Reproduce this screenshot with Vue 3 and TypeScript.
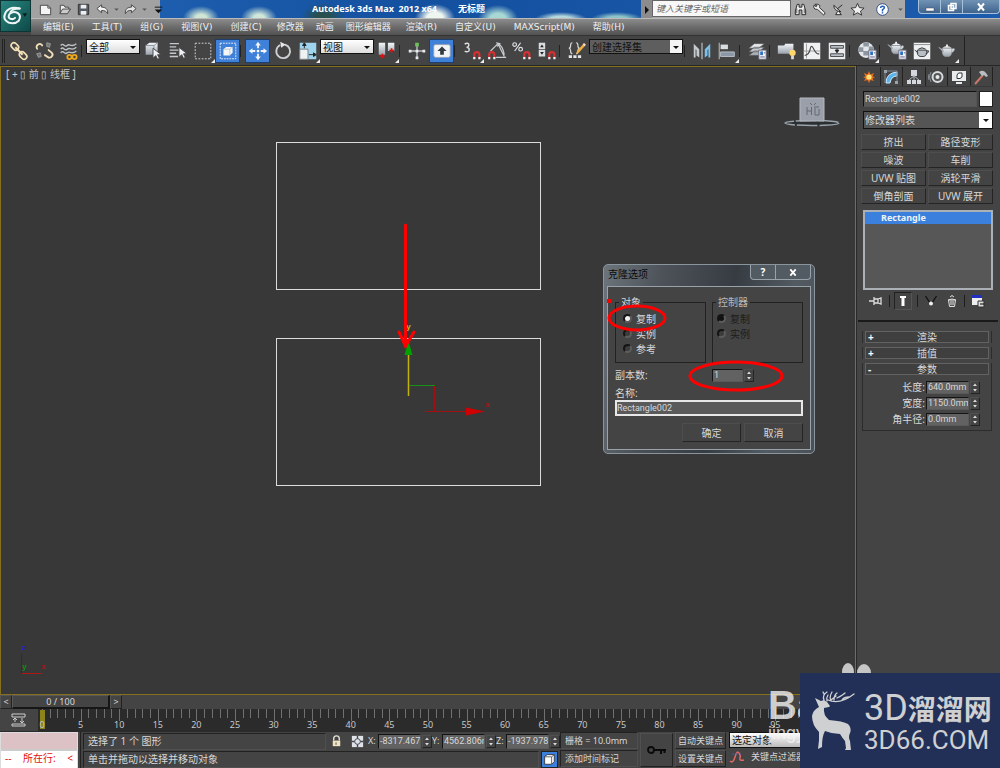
<script setup lang="ts">
import { ref } from 'vue'

interface Tool {
  kind: 'button' | 'sep' | 'select' | 'combo'
  icon?: string
  label?: string
  value?: string
  active?: boolean
  flyout?: boolean
}

const menus = [
  { text: '编辑(E)' },
  { text: '工具(T)' },
  { text: '组(G)' },
  { text: '视图(V)' },
  { text: '创建(C)' },
  { text: '修改器', tight: true },
  { text: '动画', tight: true },
  { text: '图形编辑器', tight: true },
  { text: '渲染(R)' },
  { text: '自定义(U)' },
  { text: 'MAXScript(M)' },
  { text: '帮助(H)' },
]

const sep: Tool = { kind: 'sep' }
const btn = (icon: string, label: string, active = false, flyout = false): Tool => ({
  kind: 'button',
  icon,
  label,
  active,
  flyout,
})

const tools: Tool[] = [
  btn('link', '选择并链接'),
  btn('unlink', '断开当前选择链接'),
  btn('bind', '绑定到空间扭曲'),
  sep,
  { kind: 'select', label: '选择过滤器', value: '全部' },
  btn('pick', '选择对象'),
  btn('byname', '按名称选择'),
  btn('region', '矩形选择区域', false, true),
  btn('window', '窗口/交叉', true),
  sep,
  btn('move', '选择并移动', true),
  btn('rotate', '选择并旋转'),
  btn('scale', '选择并缩放', false, true),
  { kind: 'select', label: '参考坐标系', value: '视图' },
  btn('pivot', '使用轴点中心', false, true),
  sep,
  btn('manip', '选择并操纵'),
  btn('keys', '键盘快捷键覆盖', true),
  sep,
  btn('snap3', '捕捉开关', false, true),
  btn('snapangle', '角度捕捉'),
  btn('snappct', '百分比捕捉'),
  btn('snapspin', '微调器捕捉'),
  sep,
  btn('sets', '编辑命名选择集'),
  { kind: 'combo', label: '命名选择集', value: '创建选择集' },
  sep,
  btn('mirror', '镜像'),
  btn('align', '对齐', false, true),
  sep,
  btn('layers', '层管理器'),
  sep,
  btn('ribbon', '石墨建模工具'),
  btn('curve', '曲线编辑器'),
  btn('schematic', '图解视图'),
  sep,
  btn('material', '材质编辑器', false, true),
  sep,
  btn('rsetup', '渲染设置'),
  btn('rframe', '渲染帧窗口'),
  btn('render', '渲染产品', false, true),
]

const quick = [
  ['new', '新建'],
  ['open', '打开'],
  ['save', '保存'],
  ['undo', '撤消'],
  ['caret', '撤消列表'],
  ['redo', '重做'],
  ['caret', '重做列表'],
  ['more', '自定义'],
]
const infoTools = [
  ['binoc', '搜索'],
  ['wrench', '速博应用中心'],
  ['dish', '通讯中心'],
  ['star', '收藏夹'],
]
const tabs = [
  ['create', '创建'],
  ['modify', '修改'],
  ['hier', '层次'],
  ['motion', '运动'],
  ['display', '显示'],
  ['hammer', '实用程序'],
]
const modifiers = ['挤出', '路径变形', '噪波', '车削', 'UVW 贴图', '涡轮平滑', '倒角剖面', 'UVW 展开']

const objectName = ref('Rectangle002')
const cloneName = ref('Rectangle002')
const copies = ref('1')
const cloneKind = ref('复制')
const ctrlKind = ref('复制')
const query = ref('')
const params = ref([
  { id: 'len', label: '长度:', value: '640.0mm' },
  { id: 'wid', label: '宽度:', value: '1150.0mm' },
  { id: 'rad', label: '角半径:', value: '0.0mm' },
])
const coords = ref([
  { id: 'x', label: 'X:', value: '-8317.467mm' },
  { id: 'y', label: 'Y:', value: '4562.806mm' },
  { id: 'z', label: 'Z:', value: '-1937.978mm' },
])
const frames = Array.from({ length: 20 }, (_, i) => i * 5)
</script>

<template>
  <div class="app">
    <svg class="defs" aria-hidden="true">
      <defs>
        <linearGradient id="g-metal" x1="0" y1="0" x2="0" y2="1">
          <stop offset="0" stop-color="#f4f6f8" />
          <stop offset="1" stop-color="#9aa2ac" />
        </linearGradient>
        <symbol id="i-link" viewBox="0 0 24 24">
          <g fill="none" stroke="#f3dfb8" stroke-width="1.800">
            <rect x="3" y="4" width="9" height="6" rx="3" transform="rotate(45 7.500 7)" />
            <rect x="12" y="14" width="9" height="6" rx="3" transform="rotate(45 16.500 17)" />
            <path d="M8 8l8 8" stroke-width="2.400" />
          </g>
        </symbol>
        <symbol id="i-unlink" viewBox="0 0 24 24">
          <g fill="none" stroke="#f3dfb8" stroke-width="2" stroke-linecap="round">
            <path d="M4.500 9.500a3 3 0 0 1 1-4.500c2-1.500 4-.5 4.500 1" />
            <path d="M17 11l3 2.500a3 3 0 0 1-4 5l-3-2" />
          </g>
          <path d="M15 3l4 1-1 4-3-1zM4 15l4-1 1 4-3 1z" fill="#777" stroke="#999" />
        </symbol>
        <symbol id="i-bind" viewBox="0 0 24 24">
          <g fill="none" stroke="#bfc3c7" stroke-width="1.500">
            <path d="M3 6c3-4 4 3 7 0s4 3 10-2M3 10c3-4 4 3 7 0s4 3 10-2M3 14c3-4 4 3 7 0s4 3 10-2" />
          </g>
          <g fill="none" stroke="#f0a818" stroke-width="2"><circle cx="12.500" cy="18.500" r="2.300" /><circle cx="18" cy="18.500" r="2.300" /></g>
        </symbol>
        <symbol id="i-pick" viewBox="0 0 24 24">
          <path d="M4 6l4-3h9v10l-4 3H4z" fill="url(#g-metal)" /><path d="M4 6h9l4-3M13 6v10" stroke="#8b929a" fill="none" />
          <path d="M12 9v11l3-3 2 4 2-1-2-4h4z" fill="#eef1f5" stroke="#444" />
        </symbol>
        <symbol id="i-byname" viewBox="0 0 24 24">
          <path d="M3 4h10M3 7.500h7M3 11h10M3 14.500h7M3 18h9" stroke="#c5c9cd" stroke-width="1.500" />
          <path d="M13 8v11l3-3 2 4 2-1-2-4h4z" fill="#eef1f5" stroke="#444" />
        </symbol>
        <symbol id="i-region" viewBox="0 0 24 24">
          <rect x="3.500" y="3.500" width="17" height="17" fill="none" stroke="#d6dade" stroke-dasharray="2 1.500" />
        </symbol>
        <symbol id="i-window" viewBox="0 0 24 24">
          <rect x="3.500" y="3.500" width="17" height="17" fill="none" stroke="#f0f4f8" stroke-dasharray="2 1" />
          <path d="M7 10l3-2.500h7V14l-3 3H7z" fill="#f4f6f8" /><path d="M7 10h7l3-2.500M14 10v7" stroke="#aab1b9" stroke-width=".7" fill="none" />
        </symbol>
        <symbol id="i-move" viewBox="0 0 24 24">
          <path d="M12 2l3 4h-2v3h-2V6H9zM12 22l3-4h-2v-3h-2v3H9zM2 12l4-3v2h3v2H6v2zM22 12l-4-3v2h-3v2h3v2z" fill="#f2f6fa" />
          <circle cx="12" cy="12" r="1.500" fill="#fff" />
        </symbol>
        <symbol id="i-rotate" viewBox="0 0 24 24">
          <path d="M9 5.500A7.500 7.500 0 1 0 14 5" fill="none" stroke="#cdd1d5" stroke-width="2" /><path d="M9 2l6 3-5 3.500z" fill="#e4e7ea" />
        </symbol>
        <symbol id="i-scale" viewBox="0 0 24 24">
          <path d="M3 3h18v18H3z" fill="#9fd4ee" /><path d="M3 10h9v11H3z" fill="#eef2f5" stroke="#777" />
          <path d="M8 3l-2 3h4zM8 5v4M21 16l-3-2v4zM13 16h6" fill="#222" stroke="#222" />
        </symbol>
        <symbol id="i-pivot" viewBox="0 0 24 24">
          <path d="M3 3h7v13H3zM13 3h7v9h-7z" fill="url(#g-metal)" /><path d="M7 15v5M4.500 17.500h5M17 9v5M14.500 11.500h5" stroke="#e01010" stroke-width="1.800" />
        </symbol>
        <symbol id="i-manip" viewBox="0 0 24 24">
          <path d="M12 5v15M4 12h16" stroke="#b9bec4" stroke-width="1.500" /><path d="M10 3h4v4h-4z" fill="#6fc05a" />
          <path d="M10.500 18h3v3h-3zM3 10.500h3v3H3zM18 10.500h3v3h-3zM10.500 10.500h3v3h-3z" fill="#e8ecef" />
        </symbol>
        <symbol id="i-keys" viewBox="0 0 24 24">
          <rect x="3" y="5" width="18" height="14" rx="2" fill="#f2f4f6" stroke="#8ea0b4" /><path d="M12 7l5 5h-3v4h-4v-4H7z" fill="#333a42" />
        </symbol>
        <symbol id="i-magnet" viewBox="0 0 24 24">
          <path d="M14.500 20v-4a2.800 2.800 0 0 1 5.600 0v4" fill="none" stroke="#d83030" stroke-width="2.400" />
          <path d="M13.300 18.500h2.400V21h-2.400zM18.900 18.500h2.400V21h-2.400z" fill="#f2f2f2" />
        </symbol>
        <symbol id="i-snap3" viewBox="0 0 24 24">
          <path d="M4 4.500c3-2 5-.5 4.500 1.500S6 8 6 8s3 0 3 2.500-3 3-5 1.500" fill="none" stroke="#dfe2e5" stroke-width="1.500" /><use href="#i-magnet" />
        </symbol>
        <symbol id="i-snapangle" viewBox="0 0 24 24">
          <path d="M5 12L13 4l7 14M11 19h11M13 4q5 2 7 12M11 3l4 1-3 3" fill="none" stroke="#c9cdd1" stroke-width="1.300" /><use href="#i-magnet" x="-11" />
        </symbol>
        <symbol id="i-snappct" viewBox="0 0 24 24">
          <path d="M10.500 3L4 12" stroke="#dfe2e5" stroke-width="1.300" /><g fill="none" stroke="#dfe2e5" stroke-width="1.300"><circle cx="4" cy="5" r="2" /><circle cx="10.500" cy="10" r="2" /></g><use href="#i-magnet" />
        </symbol>
        <symbol id="i-snapspin" viewBox="0 0 24 24">
          <path d="M3 3h7v7H3zM3 11h7v7H3z" fill="#d9dde1" /><path d="M4.500 8h4l-2-3zM4.500 13h4l-2 3z" fill="#222" /><use href="#i-magnet" />
        </symbol>
        <symbol id="i-sets" viewBox="0 0 24 24">
          <path d="M7 3q-2 0-2 3t-2 3q2 0 2 3t2 3M11 3q2 0 2 3t2 3q-2 0-2 3t-2 3" fill="none" stroke="#d5d8db" stroke-width="1.300" />
          <path d="M19 4l2 2-7 8-3 1 1-3z" fill="#f0b040" /><path d="M19 4l2 2" stroke="#f6e2d0" stroke-width="2" />
          <path d="M3 18h14" stroke="#e4e6e8" stroke-width="3" stroke-dasharray="3.500 1.500" />
        </symbol>
        <symbol id="i-mirror" viewBox="0 0 24 24">
          <path d="M3 4l6 6v9l-3-2v-6l-1-1v9H3z" fill="#c4c9ce" /><path d="M12 3v18" stroke="#dfe3e6" /><path d="M21 4l-6 6v9l3-2v-6l1-1v9h2z" fill="#7cc0ea" />
        </symbol>
        <symbol id="i-align" viewBox="0 0 24 24">
          <path d="M3.500 3v18" stroke="#ccc" /><path d="M5 5h8v5H5z" fill="#d9dde1" /><path d="M5 13h15v5H5z" fill="#8d98a6" stroke="#b9c1ca" />
        </symbol>
        <symbol id="i-card" viewBox="0 0 24 24">
          <path d="M14 11h8v10h-8z" fill="#f3f5f7" stroke="#667" /><path d="M15.500 12.500h3v4h-3z" fill="#2c6fc0" /><path d="M15.500 18.500h5M19.500 14h1.500" stroke="#558" />
        </symbol>
        <symbol id="i-layers" viewBox="0 0 24 24">
          <path d="M3 17l6-5h11l-6 5zM3 13l6-5h11l-6 5zM3 9l6-5h11l-6 5z" fill="url(#g-metal)" stroke="#555" stroke-width=".7" /><use href="#i-card" />
        </symbol>
        <symbol id="i-ribbon" viewBox="0 0 24 24">
          <path d="M2 6h7l1-2h9v11H2z" fill="url(#g-metal)" /><circle cx="18" cy="14" r="3.500" fill="#ffd76a" /><path d="M16.500 17h3v4h-3z" fill="#d9dde1" />
        </symbol>
        <symbol id="i-curve" viewBox="0 0 24 24">
          <path d="M3 3h18v18H3z" fill="#eef0f2" /><path d="M6 4v16M3 12h18" stroke="#999" /><path d="M4 17q5-1 6-7t4 0 6 5" fill="none" stroke="#444" stroke-width="1.200" />
        </symbol>
        <symbol id="i-schematic" viewBox="0 0 24 24">
          <path d="M3 3h18v18H3z" fill="#e9ebee" /><path d="M5 6h14v3H5zM5 15h14v3H5z" fill="#b9bfc6" stroke="#444" /><path d="M12 9v4M10 11l2 3 2-3z" stroke="#222" fill="#222" />
        </symbol>
        <symbol id="i-material" viewBox="0 0 24 24">
          <circle cx="11" cy="11" r="8.500" fill="#e3e6ea" /><path d="M8 3h6v4H8zM3 8h5v5H3zM14 7h5v5h-5zM8 12h6v5H8z" fill="#8d959f" /><use href="#i-card" />
        </symbol>
        <symbol id="i-pot" viewBox="0 0 24 24">
          <path d="M7 10h10q1 8-3 9h-4q-4-1-3-9zM3 9l5 3v2zM17 11q4-2 3 1t-4 3" fill="url(#g-metal)" stroke="#99a0a8" stroke-width=".7" /><path d="M7 9.500q5-4 10 0zM11 6h2v2h-2z" fill="#eef1f4" />
        </symbol>
        <symbol id="i-rsetup" viewBox="0 0 24 24"><use href="#i-pot" x="-1" y="-4" /><use href="#i-card" /></symbol>
        <symbol id="i-rframe" viewBox="0 0 24 24">
          <path d="M3 3h18v18H3z" fill="#eef0f2" /><path d="M3 5h18" stroke="#888" /><path d="M7 11h10q1 6-3 7h-4q-4-1-3-7zM4 11l4 3M17 12q3-1 2 1t-3 2M8 10q4-3 8 0" fill="#b8bfc7" stroke="#333" />
        </symbol>
        <symbol id="i-render" viewBox="0 0 24 24"><use href="#i-pot" y="-1" /></symbol>

        <symbol id="i-new" viewBox="0 0 16 16"><path d="M2.500 3.500h8l3 3v7h-11z" fill="#f4f4f4" stroke="#444" /><path d="M10.500 3.500v3h3" fill="none" stroke="#444" /></symbol>
        <symbol id="i-open" viewBox="0 0 16 16"><path d="M3.500 12.500v-9h4l1 2h4v2" fill="#eee" stroke="#444" /><path d="M3 12.500l3-5h8.500l-3.500 5z" fill="#ccc" stroke="#444" /></symbol>
        <symbol id="i-save" viewBox="0 0 16 16"><path d="M2.500 2.500h11v11h-11z" fill="#555c66" stroke="#333" /><path d="M5 3h6v4H5zM5 9.500h6v4H5z" fill="#eee" /></symbol>
        <symbol id="i-undo" viewBox="0 0 16 16"><path d="M2 7l5-4v2.500c4 0 7 2 6.500 7C12 9.500 10 9 7 9v2.500z" fill="#f4f4f4" stroke="#444" /></symbol>
        <symbol id="i-redo" viewBox="0 0 16 16"><path d="M14 7L9 3v2.500c-4 0-7 2-6.500 7C4 9.500 6 9 9 9v2.500z" fill="#e4e4e4" stroke="#444" /></symbol>
        <symbol id="i-caret" viewBox="0 0 16 16"><path d="M4 6h8l-4 4z" fill="#555" /></symbol>
        <symbol id="i-more" viewBox="0 0 16 16"><path d="M4 5.500h8" stroke="#111" /><path d="M4 8h8l-4 4z" fill="#111" /></symbol>
        <symbol id="i-binoc" viewBox="0 0 16 16"><path d="M4.500 2.500h2v3h3v-3h2l2 7v4h-4v-5h-3v5h-4v-4z" fill="#eee" stroke="#222" /><path d="M4 7v5M12 7v5" stroke="#555" /></symbol>
        <symbol id="i-wrench" viewBox="0 0 16 16"><path d="M3 2.500q4-1 5.500 1.500l-.5 2 6 5.500-1.500 2.500-6.500-6-3-.5q-2-2-1-4l2.500 1.500 1-1z" fill="#eee" stroke="#333" /></symbol>
        <symbol id="i-dish" viewBox="0 0 16 16"><path d="M3 3.500q0 6 7.500 7z" fill="#eee" stroke="#222" /><path d="M6.500 7.500L12 3M7 10l-2 3.500h6L9 11" fill="#eee" stroke="#222" /></symbol>
        <symbol id="i-star" viewBox="0 0 16 16"><path d="M8 1.500l2 4.500 5 .5-3.800 3.200L12.500 14 8 11.500 3.500 14l1.300-4.300L1 6.500 6 6z" fill="#eee" stroke="#333" /></symbol>
        <symbol id="i-help" viewBox="0 0 16 16"><circle cx="8" cy="8" r="6.200" fill="#fff" stroke="#2b4a86" /><path d="M6 6.500q0-2 2-2t2 1.700q0 1-2 2V10" fill="none" stroke="#2460c0" stroke-width="1.600" /><path d="M7.200 10.800h1.600v1.500H7.200z" fill="#2460c0" /></symbol>

        <symbol id="i-create" viewBox="0 0 16 16"><path d="M8 2l1.500 3.500L13 4l-1.500 3.500L14 8l-2.500 1.500L13 12l-3.500-1L8 14l-1.500-3L3 12l1.500-2.500L2 8l2.500-.5L3 4l3.500 1.500z" fill="#e8701a" /><circle cx="8" cy="8" r="2.600" fill="#ffe27a" /></symbol>
        <symbol id="i-modify" viewBox="0 0 16 16"><path d="M3 14Q3 4 14 3v4Q8 7 7 14z" fill="#5ab4ec" stroke="#cdeaff" /><path d="M2 2v12M2 2h12v12" fill="none" stroke="#7c8894" /><path d="M1 1h3v3H1zM12 12h3v3h-3z" fill="#9aa2aa" /></symbol>
        <symbol id="i-hier" viewBox="0 0 16 16"><path d="M5 1h6v6H5zM1 11h4v4H1zM6 11h4v4H6zM11 11h4v4h-4z" fill="#d4d8dc" /><path d="M8 6v5M3 11l5-4 5 4" stroke="#b0b5ba" fill="none" /></symbol>
        <symbol id="i-motion" viewBox="0 0 16 16"><circle cx="9.500" cy="8" r="5" fill="#555" stroke="#d8dce0" stroke-width="2" /><circle cx="9.500" cy="8" r="2" fill="#e8ebee" /><path d="M3 3q-3 5 0 10M1 5q-1 3 0 6" stroke="#8a9096" fill="none" /></symbol>
        <symbol id="i-display" viewBox="0 0 16 16"><path d="M1 2h14v10H1zM5 13h6v2H5z" fill="#e8ebee" /><path d="M6 6l1.500-2H11v4L9 9.500H6z" fill="#fff" stroke="#333" /></symbol>
        <symbol id="i-hammer" viewBox="0 0 16 16"><path d="M2 15L10 6" stroke="#c87868" stroke-width="2" /><path d="M6 3q4-3 7 1l2 3-2 1-2-2-2 1z" fill="#b8bec4" /></symbol>
        <symbol id="i-cube" viewBox="0 0 16 16"><path d="M3 5l3-2h8v8l-3 3H3z" fill="#fff" stroke="#333" /><path d="M3 5.500h8L14 3M11 5.500V14" fill="none" stroke="#555" /></symbol>
        <symbol id="i-spin" viewBox="0 0 8 14"><path d="M1.500 5h5L4 2zM1.500 9h5L4 12z" fill="#dcdcdc" /></symbol>
      </defs>
    </svg>

    <header class="head">
      <button class="logo" aria-label="应用程序菜单">
        <svg viewBox="0 0 31 32">
          <g fill="none" stroke="#eef6f4" stroke-linecap="round">
            <path d="M20 8Q10 5 5 12q-4 8 3 11 7 2 11-2 3-5-1-8-5-3-9 1-2 4 1 5 3 1 5-1" stroke-width="2.200" />
            <path d="M20 8q-8 0-10 4" stroke-width="2" />
          </g>
          <path d="M23 13h5l-2.500 4z" fill="#0b1f1e" />
        </svg>
      </button>
      <div class="headmain">
        <div class="titlebar">
          <div class="quick">
            <button v-for="(q, i) in quick" :key="i" :class="{ thin: q[0] === 'caret' }" :aria-label="q[1]">
              <svg><use :href="'#i-' + q[0]" /></svg>
            </button>
          </div>
          <div class="caption"><span>Autodesk 3ds Max&nbsp; 2012 x64</span><span>无标题</span></div>
          <div class="info">
            <button class="expand" aria-label="展开"><svg viewBox="0 0 11 17"><path d="M4 5l4 4-4 4z" fill="#111" /></svg></button>
            <input v-model="query" class="search" aria-label="搜索" placeholder="键入关键字或短语" />
            <div class="infotools">
              <button v-for="t in infoTools" :key="t[0]" :aria-label="t[1]"><svg><use :href="'#i-' + t[0]" /></svg></button>
              <button class="help" aria-label="帮助"><svg><use href="#i-help" /></svg></button>
              <button class="thin" aria-label="帮助菜单"><svg><use href="#i-caret" /></svg></button>
            </div>
          </div>
          <div class="winctl">
            <button aria-label="最小化"><svg viewBox="0 0 16 12"><path d="M4 7h8v3H4z" fill="#fff" stroke="#445" stroke-width=".5" /></svg></button>
            <button aria-label="还原"><svg viewBox="0 0 16 12"><path d="M7 2.500h5v5h-5zM4.500 4.500h5v5h-5z" fill="#6d8cae" stroke="#fff" stroke-width="1.500" /></svg></button>
            <button class="wide" aria-label="关闭"><svg viewBox="0 0 16 12"><path d="M5 2.500l6 7M11 2.500l-6 7" stroke="#fff" stroke-width="2" /></svg></button>
          </div>
        </div>
        <nav class="menubar">
          <button v-for="m in menus" :key="m.text" :class="{ tight: m.tight }">{{ m.text }}</button>
        </nav>
      </div>
    </header>

    <div class="toolbar">
      <span class="grip"></span>
      <template v-for="(t, i) in tools" :key="i">
        <span v-if="t.kind === 'sep'" class="tsep"></span>
        <button v-else-if="t.kind === 'button'" class="tool" :class="{ active: t.active, flyout: t.flyout }" :aria-label="t.label">
          <svg><use :href="'#i-' + t.icon" /></svg>
        </button>
        <span v-else class="drop" :class="t.kind">
          <select :aria-label="t.label"><option>{{ t.value }}</option></select>
        </span>
      </template>
      <span class="tend"></span>
    </div>

    <div class="work">
      <main class="viewport">
        <div class="vplabel">[ + ▯ 前 ▯ 线框 ]</div>
        <svg class="scene" aria-hidden="true">
          <g fill="none" stroke="#dcdcdc">
            <rect x="275.500" y="75.500" width="264" height="147" />
            <rect x="275.500" y="271.500" width="264" height="147" />
          </g>
          <path d="M407.500 288v41" stroke="#c0b010" stroke-width="1.500" />
          <path d="M433.500 319v26M424 344.500h42" stroke="#a01010" fill="none" />
          <path d="M408 318.500h26" stroke="#189018" />
          <path d="M465 340.500v8l19-4z" fill="#d00000" />
          <path d="M407.500 274l4 14h-8z" fill="#00a000" />
          <text x="405" y="262" class="axis yellow">y</text>
          <text x="484" y="340" class="axis red">x</text>
          <g fill="none" stroke="#f00" stroke-width="3" stroke-linecap="round">
            <path d="M404.500 158v121" /><path d="M398 265l6.500 14 8.500-14" />
          </g>
          <path d="M20.500 587v20" stroke="#1a1ac8" /><path d="M21 606.500h20" stroke="#b01818" />
          <text x="20" y="583" class="axis blue">z</text>
          <text x="21" y="602" class="axis green">y</text>
          <text x="40" y="602" class="axis red">x</text>
        </svg>
        <svg class="viewcube" viewBox="0 0 58 30" aria-label="ViewCube">
          <ellipse cx="29" cy="26" rx="27" ry="2.500" fill="#2c2f31" stroke="#9aa3ab" stroke-width="1.500" stroke-dasharray="20 2" />
          <path d="M17 1h24v23H17z" fill="#9b9fa9" stroke="#b4b8c0" />
          <path d="M24 10v8M24 14h4M28.500 10v8M31 10h5M32 11v7h4v-6M27 6l2 2M33 6l-2 2" fill="none" stroke="#646973" />
        </svg>
      </main>

      <aside class="panel">
        <div class="tabs">
          <button v-for="t in tabs" :key="t[0]" :aria-label="t[1]" :class="{ on: t[0] === 'modify' }"><svg><use :href="'#i-' + t[0]" /></svg></button>
        </div>
        <div class="namerow">
          <input v-model="objectName" aria-label="对象名称" />
          <button class="swatch" aria-label="对象颜色"></button>
        </div>
        <span class="drop modlist"><select aria-label="修改器列表"><option>修改器列表</option></select></span>
        <div class="modgrid"><button v-for="m in modifiers" :key="m">{{ m }}</button></div>
        <ul class="stack"><li>Rectangle</li></ul>
        <div class="stacktools">
          <button aria-label="锁定堆栈"><svg viewBox="0 0 16 16"><path d="M1 8h5M6 4v8M6 6h4v4H6M10 6l3-1v6l-3-1" stroke="#ddd" fill="none" stroke-width="1.300" /></svg></button>
          <i></i>
          <button class="sunk" aria-label="显示最终结果"><svg viewBox="0 0 16 16"><path d="M5 3h6v2H9.500v8h-3V5H5z" fill="#fff" /></svg></button>
          <i></i>
          <button aria-label="使唯一"><svg viewBox="0 0 16 16"><path d="M2.500 3l4.500 7M13.500 3L9 10" stroke="#111" stroke-width="1.300" /><circle cx="8" cy="10.500" r="2" fill="#eee" /></svg></button>
          <button aria-label="移除修改器"><svg viewBox="0 0 16 16"><path d="M4.500 7h7l-1 6.500h-5zM4 7q4-2 8 0M6 4q2-3 4 0" fill="#555" stroke="#ddd" /><path d="M7 8v4M9 8v4" stroke="#ddd" /></svg></button>
          <i></i>
          <button aria-label="配置修改器集"><svg viewBox="0 0 16 16"><path d="M2 2h10v10H2z" fill="#eee" /><path d="M2 2h10v3H2z" fill="#2030c0" /><path d="M8 8h6v6H8z" fill="#ddd" stroke="#333" /><path d="M10 11h4" stroke="#000" /></svg></button>
        </div>
        <div class="rollouts">
          <section class="rollout"><button><b>+</b>渲染</button></section>
          <section class="rollout"><button><b>+</b>插值</button></section>
          <section class="rollout open">
            <button><b>-</b>参数</button>
            <div class="params">
              <div v-for="p in params" :key="p.id" class="prow">
                <label :for="p.id">{{ p.label }}</label>
                <input :id="p.id" v-model="p.value" />
                <button class="spin" :aria-label="'调整' + p.label"><svg><use href="#i-spin" /></svg></button>
              </div>
            </div>
          </section>
        </div>
      </aside>
    </div>

    <div class="slider">
      <button aria-label="上一帧">&lt;</button>
      <button class="thumb">0 / 100</button>
      <button aria-label="下一帧">&gt;</button>
    </div>

    <div class="timeline">
      <button class="mini" aria-label="打开迷你曲线编辑器">
        <svg viewBox="0 0 16 16"><path d="M1 2h13v3H1zM1 12h13v2H1zM4 6v4M11 6v4M2 8l2-2 2 2M9 9l2 2 2-2" fill="none" stroke="#ccc" /></svg>
      </button>
      <div class="ruler">
        <div v-for="f in frames" :key="f" class="cell">
          <i v-for="k in 5" :key="k"></i>
          <span>{{ f }}</span>
        </div>
      </div>
    </div>

    <footer class="status">
      <div class="listener">
        <div class="pink"></div>
        <div class="white"><span>--</span><span>所在行:</span><span>&lt;</span></div>
      </div>
      <div class="center">
        <div class="srow">
          <div class="well prompt">选择了 1 个 图形</div>
          <button class="sicon" aria-label="选择锁定"><svg viewBox="0 0 16 16"><path d="M5 7V5q0-3 3-3t3 3v2" fill="none" stroke="#e4e0d4" stroke-width="1.500" /><path d="M4 7h8v6H4z" fill="#efe3c0" /><path d="M7.500 9v2.500" stroke="#444" /></svg></button>
          <button class="sicon" aria-label="绝对模式变换输入"><svg viewBox="0 0 16 16"><path d="M2 2h12v12H2z" fill="#dfe3e6" /><circle cx="8" cy="8" r="3" fill="none" stroke="#445" /><path d="M8 2v3M8 11v3M2 8h3M11 8h3" stroke="#445" stroke-width="1.500" /></svg></button>
          <div v-for="c in coords" :key="c.id" class="coord">
            <label :for="c.id">{{ c.label }}</label>
            <input :id="c.id" v-model="c.value" />
            <button class="spin" :aria-label="'调整' + c.label"><svg><use href="#i-spin" /></svg></button>
          </div>
        </div>
        <div class="srow">
          <div class="well hint">单击并拖动以选择并移动对象</div>
          <button class="iso" aria-label="孤立当前选择"><svg><use href="#i-cube" /></svg></button>
        </div>
      </div>
      <div class="tags">
        <div class="well">栅格 = 10.0mm</div>
        <button class="well">添加时间标记</button>
      </div>
      <button class="key" aria-label="设置关键点"><svg viewBox="0 0 22 12"><circle cx="5" cy="6" r="3" fill="none" stroke="#0a0a0a" stroke-width="1.800" /><path d="M8 6h12M15 6v4M18.500 6v3" stroke="#0a0a0a" stroke-width="2" /></svg></button>
      <div class="keys">
        <button>自动关键点</button>
        <button>设置关键点</button>
      </div>
      <div class="filters">
        <span class="drop picked"><select aria-label="选定对象"><option>选定对象</option></select></span>
        <div class="srow">
          <button class="tangent" aria-label="新建关键点的默认切线"><svg viewBox="0 0 16 16"><path d="M1 12q3 3 5-4t4-4q2 2 1 5t4 2" fill="none" stroke="#e06868" stroke-width="1.500" /><path d="M3 5h9" stroke="#4a58b0" stroke-dasharray="2 2" /></svg></button>
          <button class="filter">关键点过滤器...</button>
        </div>
      </div>
    </footer>

    <form class="dialog" role="dialog" aria-label="克隆选项" @submit.prevent>
      <div class="dtitle">
        <span>克隆选项</span>
        <div class="dctl">
          <button type="button" aria-label="帮助">?</button>
          <button type="button" class="x" aria-label="关闭"><svg viewBox="0 0 10 10"><path d="M2 1.500l6 7M8 1.500l-6 7" stroke="#fff" stroke-width="2" /></svg></button>
        </div>
      </div>
      <div class="dbody">
        <div class="groups">
          <fieldset>
            <legend>对象</legend>
            <label v-for="k in ['复制', '实例', '参考']" :key="k"><input v-model="cloneKind" type="radio" name="kind" :value="k" />{{ k }}</label>
          </fieldset>
          <fieldset class="off">
            <legend>控制器</legend>
            <label v-for="k in ['复制', '实例']" :key="k"><input v-model="ctrlKind" type="radio" name="ctrl" :value="k" disabled />{{ k }}</label>
          </fieldset>
        </div>
        <div class="copies">
          <label for="copies">副本数:</label>
          <input id="copies" v-model="copies" />
          <button type="button" class="spin" aria-label="调整副本数"><svg><use href="#i-spin" /></svg></button>
        </div>
        <label class="nlabel" for="cname">名称:</label>
        <input id="cname" v-model="cloneName" class="cname" />
        <div class="dbtns">
          <button type="submit">确定</button>
          <button type="button">取消</button>
        </div>
      </div>
      <svg class="marks" viewBox="0 0 220 192" aria-hidden="true">
        <ellipse cx="38" cy="54" rx="28" ry="12" fill="none" stroke="#f00" stroke-width="3" />
        <ellipse cx="137" cy="112" rx="46" ry="14" fill="none" stroke="#f00" stroke-width="3" />
        <path d="M8 35h4v4H8z" fill="#f00" />
      </svg>
    </form>

    <div class="baidu" aria-hidden="true">
      <svg viewBox="0 0 34 24"><ellipse cx="8" cy="11" rx="6" ry="9" /><ellipse cx="24" cy="12" rx="7" ry="9" /></svg>
      <b>Bai</b>
      <span>jingyan</span>
    </div>
    <div class="brand">
      <svg viewBox="10 8 48 66" aria-hidden="true">
        <path d="M15 18l6 3 3-1 3 2 3 4-1 1-5 1q-1 7 5 12 14 1 19 4 4 4 2 9-2 4 0 8l1 9h-6l1-2-1-7q-2-2-5-7-8 0-15-3-3 5-3 16l-4 2 1-9v-8q-7-7-7-16 1-6 7-9z" fill="#cfd0d2" />
        <path d="M24 20q-2-5 3-8M27 21q-1-3 1-6M28 20q12 5 26-6M31 21q-2-4 1-9M34 20q0-5 3-7M31 20l5-4M37 18q6-3 8-5M42 20q2-3 7-3M24 14l-1-2" fill="none" stroke="#cfd0d2" stroke-width="1.300" stroke-linecap="round" />
      </svg>
      <div class="btext">
        <div class="bname"><span>3D</span>溜溜网</div>
        <div class="burl">3D66.COM</div>
      </div>
    </div>
  </div>
</template>

<style>
html,
body {
  margin: 0;
  background: #444;
}
</style>

<style scoped>
.app {
  position: relative;
  display: flex;
  flex-direction: column;
  min-height: 100vh;
  overflow: hidden;
  background: #444;
  color: #d8d8d8;
  font: 10px/12px 'Noto Sans', 'Noto Sans CJK SC', sans-serif;
}
.app * {
  box-sizing: border-box;
}
.defs {
  position: absolute;
  width: 0;
  height: 0;
}
button,
input,
select {
  margin: 0;
  padding: 0;
  border: 0;
  border-radius: 0;
  background: none;
  color: inherit;
  font: inherit;
  min-width: 0;
}
button {
  white-space: nowrap;
}
svg {
  display: block;
}

/* title and menu */
.head {
  display: flex;
  height: 35px;
}
.logo {
  width: 31px;
  height: 32px;
  background: linear-gradient(135deg, #2a8580, #0d4a48);
  border: 1px solid #0c3534;
}
.logo svg {
  width: 100%;
  height: 100%;
}
.headmain {
  flex: 1;
  min-width: 0;
}
.titlebar {
  display: flex;
  height: 19px;
  background:
    radial-gradient(ellipse 18px 12px at 170px 18px, #cfe6d4 30%, transparent),
    radial-gradient(ellipse 18px 12px at 228px 18px, #cfe6d8 30%, transparent),
    radial-gradient(ellipse 22px 14px at 292px 17px, #27504e 30%, transparent),
    radial-gradient(ellipse 20px 14px at 404px 18px, #eef6f0 40%, transparent),
    radial-gradient(ellipse 20px 14px at 467px 19px, #a8d8d4 40%, transparent),
    radial-gradient(ellipse 26px 7px at 530px 19px, #b4d8dc 40%, transparent),
    radial-gradient(ellipse 26px 7px at 586px 19px, #8ec4c8 40%, transparent),
    linear-gradient(90deg, #2264b4, #1450a0 40%, #1c5cac);
  border-bottom: 1px solid #bbb;
}
.quick {
  display: flex;
  align-items: center;
  width: 129px;
  padding-left: 5px;
  background: #a2a2a2;
}
.quick button {
  flex: none;
  width: 19px;
}
.quick svg,
.infotools svg {
  width: 15px;
  height: 15px;
  margin: auto;
}
.quick .thin,
.infotools .thin {
  width: 9px;
}
.quick .thin svg,
.infotools .thin svg {
  width: 9px;
}
.caption {
  display: flex;
  flex: 1;
  justify-content: center;
  align-items: center;
  gap: 21px;
  padding-right: 4px;
  color: #fff;
  font-size: 9px;
  font-weight: 700;
  white-space: nowrap;
}
.info {
  display: flex;
  width: 264px;
  background: #a8a8a8;
}
.expand {
  flex: none;
  width: 11px;
  background: #8c8c8c;
}
.expand svg {
  width: 11px;
}
.search {
  flex: 1;
  height: 17px;
  padding-left: 3px;
  background: #f8f8f8;
  color: #333;
  font-size: 9px;
  font-style: italic;
  border: 1px solid #666;
}
.search::placeholder {
  color: #666;
}
.infotools {
  display: flex;
  align-items: center;
}
.infotools button {
  width: 19px;
}
.infotools .help {
  width: 27px;
  margin-left: 2px;
}
.winctl {
  display: flex;
  width: 82px;
  height: 14px;
  margin-left: 13px;
  border: 1px solid #a8c0d8;
  border-top: 0;
  border-radius: 0 0 4px 4px;
  background: linear-gradient(#7092b4, #3f658e);
}
.winctl button {
  width: 22px;
  border-right: 1px solid #a8c0d8;
}
.winctl .wide {
  flex: 1;
  border: 0;
}
.winctl svg {
  width: 16px;
  height: 12px;
  margin: auto;
}
.menubar {
  display: flex;
  height: 16px;
  padding-left: 3px;
  background: linear-gradient(#8c8c8c, #6c6c6c 50%, #525252);
  color: #f0f0f0;
  font: 9px/12px 'DejaVu Sans', 'Noto Sans CJK SC', sans-serif;
}
.menubar button {
  padding: 0 9px;
}
.menubar .tight {
  padding: 0 6px;
}

/* toolbar */
.toolbar {
  display: flex;
  align-items: center;
  height: 31px;
  border-bottom: 1px solid #262626;
  border-top: 1px solid #333;
}
.grip {
  width: 3px;
  height: 24px;
  margin: 0 1px 0 2px;
  border-left: 1px solid #222;
  border-right: 1px solid #222;
}
.tool {
  position: relative;
  flex: none;
  width: 25px;
  height: 24px;
}
.tool.active {
  background: #3f80d8;
  border: 1px solid #1d3f70;
}
.tool svg {
  width: 22px;
  height: 22px;
  margin: auto;
}
.flyout::after {
  content: '';
  position: absolute;
  right: 0;
  bottom: 0;
  border: 2px solid;
  border-color: transparent #eee #eee transparent;
}
.tsep {
  flex: none;
  width: 5px;
  height: 12px;
  border-left: 1px solid #222;
}
.tend {
  width: 6px;
  height: 29px;
  border-right: 1px solid #222;
}
.drop {
  position: relative;
  display: block;
  flex: none;
}
.drop select {
  appearance: none;
  display: block;
  width: 100%;
  height: 100%;
  padding-left: 2px;
}
.drop::after {
  content: '';
  position: absolute;
  right: 3px;
  top: 50%;
  margin-top: -1px;
  border: 3px solid transparent;
  border-top-color: #111;
  border-bottom: 0;
  pointer-events: none;
}
.drop.select,
.drop.combo {
  width: 54px;
  height: 15px;
  margin-bottom: 8px;
  background: linear-gradient(#fff, #ddd);
  border: 1px solid #111;
  color: #111;
}
.drop.combo {
  width: 94px;
  margin-right: 1px;
  background: linear-gradient(90deg, #5e5e5e 80px, #f4f4f4 80px);
}

/* workspace */
.work {
  display: flex;
  flex: 1;
}
.viewport {
  position: relative;
  flex: 1;
  min-width: 0;
  border: 1px solid #85701f;
  background: #383838;
}
.vplabel {
  padding: 1px 5px;
  color: #c8c8c8;
  word-break: keep-all;
}
.scene {
  position: absolute;
  left: 0;
  top: 0;
  width: 100%;
  height: 100%;
}
.axis {
  font: 700 8px 'Liberation Mono', monospace;
}
.yellow {
  fill: #c8b818;
}
.red {
  fill: #a01818;
}
.blue {
  fill: #2424c8;
}
.green {
  fill: #109010;
}
.viewcube {
  position: absolute;
  right: 14px;
  top: 30px;
  width: 58px;
  height: 30px;
}
.panel {
  width: 144px;
  padding: 0 7px 0 6px;
  border-left: 1px solid #2a2a2a;
}
.tabs {
  display: flex;
  height: 20px;
  margin: 1px 0 4px -5px;
  border-bottom: 1px solid #383838;
}
.tabs button {
  width: 23px;
  border-right: 1px solid #222;
}
.tabs svg {
  width: 16px;
  height: 16px;
  margin: auto;
}
.namerow {
  display: flex;
  gap: 2px;
}
.namerow input {
  flex: 1;
  height: 16px;
  padding-left: 1px;
  background: #5a5a5a;
  border: 1px solid;
  border-color: #111 #555 #555 #111;
  font: 9px/12px Roboto, sans-serif;
}
.swatch {
  width: 14px;
  height: 16px;
  background: #fff;
  border: 1px solid #222;
}
.modlist {
  height: 18px;
  margin-top: 4px;
  border: 1px solid #111;
  background: linear-gradient(270deg, #fff 13px, #555 13px);
}
.modlist select {
  padding-left: 1px;
}
.modgrid {
  display: grid;
  grid-template-columns: 1fr 1fr;
  gap: 2px;
  margin: 5px 0 6px -2px;
}
.modgrid button,
.dbtns button {
  height: 16px;
  border: 1px solid;
  border-color: #4e4e4e #242424 #242424 #4e4e4e;
  line-height: 12px;
}
.stack {
  height: 80px;
  margin: 0;
  padding: 0;
  border: 2px solid #aab0b6;
  background: #575757;
  list-style: none;
}
.stack li {
  padding-left: 16px;
  background: #3a80dc;
  color: #f0f4f8;
  font-size: 9px;
  font-weight: 700;
}
.stacktools {
  display: flex;
  align-items: center;
  justify-content: space-between;
  height: 22px;
  padding: 0 7px 0 5px;
}
.stacktools svg {
  width: 16px;
  height: 16px;
}
.stacktools i {
  width: 1px;
  height: 12px;
  background: #1e1e1e;
}
.sunk {
  border: 1px solid;
  border-color: #222 #555 #555 #222;
}
.rollouts {
  margin: 8px -5px 0;
  padding: 9px 6px 10px 4px;
  border-top: 2px solid #1a1a1a;
}
.rollout {
  margin-bottom: 4px;
  border: 1px solid #2c2c2c;
  border-top: 0;
  border-bottom: 0;
}
.rollout > button {
  position: relative;
  display: block;
  width: calc(100% - 4px);
  height: 12px;
  margin: 0 2px;
  border: 1px solid #626262;
  background: #3f3f3f;
  line-height: 10px;
}
.rollout b {
  position: absolute;
  left: 2px;
  color: #fff;
}
.rollout.open {
  border-bottom: 1px solid #2c2c2c;
}
.params {
  display: grid;
  gap: 2px;
  padding: 5px 11px 4px 0;
}
.prow {
  display: flex;
  justify-content: flex-end;
  align-items: center;
  height: 14px;
}
.prow input,
.coord input,
.copies input {
  width: 43px;
  height: 13px;
  margin: 0 1px;
  padding-left: 1px;
  border: 1px solid;
  border-color: #141414 #5a5a5a #5a5a5a #141414;
  background: #626262;
  font: 9px/11px Roboto, sans-serif;
}
.spin {
  flex: none;
  width: 10px;
  height: 13px;
  border: 1px solid;
  border-color: #505050 #242424 #242424 #505050;
}
.spin svg {
  width: 8px;
  height: 11px;
}

/* time controls */
.slider {
  display: flex;
  height: 14px;
  font-size: 9px;
}
.slider button {
  width: 12px;
  border: 1px solid;
  border-color: #555 #222 #222 #555;
  line-height: 10px;
}
.slider .thumb {
  width: 98px;
  border-width: 1px 2px 2px 1px;
  border-color: #585858 #161616 #161616 #585858;
}
.timeline {
  display: flex;
  height: 22px;
  background: #2b2b2b;
}
.mini {
  width: 38px;
  background: #444;
}
.mini svg {
  width: 16px;
  height: 16px;
  margin: auto;
}
.ruler {
  display: flex;
  flex: 1;
  margin: 0 186px 0 4px;
}
.cell {
  position: relative;
  display: flex;
  flex: 1;
}
.cell i {
  flex: 1;
  height: 9px;
  border-left: 1px solid #707070;
}
.cell i:first-child {
  height: 12px;
}
.cell span {
  position: absolute;
  left: 0;
  bottom: 1px;
  transform: translateX(-50%);
  color: #c8c8c8;
  font-size: 9px;
  line-height: 11px;
}
.cell:first-child::before {
  content: '';
  position: absolute;
  left: -2px;
  top: 1px;
  bottom: 2px;
  width: 5px;
  background: #8c8418;
}

/* status */
.status {
  display: flex;
  height: 37px;
  border-top: 1px solid #2a2a2a;
}
.listener {
  width: 78px;
  border: 1px solid #ddd;
  border-bottom: 0;
}
.pink {
  height: 16px;
  background: #dcc2c4;
}
.white {
  display: flex;
  justify-content: space-between;
  height: 19px;
  padding: 0 4px;
  border-top: 2px solid #ccc;
  background: #fff;
  color: #e01010;
  line-height: 14px;
}
.center {
  width: 480px;
  margin-left: 2px;
  padding-left: 2px;
  border-left: 1px solid #222;
}
.srow {
  display: flex;
  align-items: center;
  height: 18px;
}
.well {
  height: 17px;
  padding-left: 4px;
  border: 1px solid;
  border-color: #222 #505050 #505050 #222;
  line-height: 15px;
  text-align: left;
  white-space: nowrap;
}
.prompt {
  flex: 1;
}
.hint {
  flex: 1;
  margin-right: 2px;
}
.sicon {
  width: 21px;
}
.sicon svg {
  width: 15px;
  height: 15px;
  margin: auto;
}
.coord {
  display: flex;
  align-items: center;
  width: 64px;
  font-size: 9px;
}
.coord label {
  width: 9px;
}
.coord input {
  height: 15px;
}
.iso {
  width: 17px;
  height: 17px;
  margin-right: 2px;
  border: 1px solid #222;
  background: #3a80dc;
}
.iso svg {
  width: 14px;
  height: 14px;
}
.tags {
  width: 78px;
  font-size: 9px;
}
.tags .well {
  display: block;
  width: 100%;
  margin-bottom: 1px;
}
.key {
  width: 33px;
  margin: 1px 2px;
  border: 1px solid;
  border-color: #505050 #222 #222 #505050;
}
.key svg {
  width: 22px;
  height: 12px;
  margin: auto;
}
.keys {
  width: 51px;
}
.keys button {
  width: 100%;
  height: 17px;
  margin-bottom: 1px;
  border: 1px solid;
  border-color: #505050 #222 #222 #505050;
  font-size: 9px;
}
.filters {
  flex: 1;
  margin-left: 3px;
}
.picked {
  width: 90px;
  height: 16px;
  border: 1px solid #111;
  background: linear-gradient(#fff, #bbb);
  color: #111;
}
.tangent {
  width: 20px;
}
.tangent svg {
  width: 16px;
  height: 16px;
}
.filter {
  padding: 0 2px;
  font-size: 9px;
}

/* dialog */
.dialog {
  position: absolute;
  left: 603px;
  top: 264px;
  width: 212px;
  padding: 0 3px 3px;
  border: 1px solid #8a949c;
  border-radius: 5px;
  background: linear-gradient(100deg, #6c747c, #4c5258 25%, #363c42 55%, #535b62 80%, #4a5056);
}
.dtitle {
  display: flex;
  justify-content: space-between;
  height: 21px;
  padding: 2px 0 0 1px;
  color: #0c0c0c;
  line-height: 14px;
}
.dctl {
  display: flex;
  height: 15px;
  margin-top: -2px;
  border: 1px solid #98a2aa;
  border-top: 0;
  border-radius: 0 0 4px 4px;
  background: #525a62;
  color: #fff;
  font-weight: 700;
}
.dctl button {
  width: 24px;
}
.dctl .x {
  width: 35px;
  border-left: 1px solid #98a2aa;
}
.dctl .x svg {
  width: 10px;
  height: 9px;
  margin: auto;
}
.dbody {
  padding: 9px 7px 7px;
  border: 1px solid #98a2aa;
  background: #444;
}
.groups {
  display: grid;
  grid-template-columns: 1fr 1fr;
  gap: 6px;
}
fieldset {
  min-width: 0;
  height: 67px;
  margin: 0;
  padding: 3px 0 0 7px;
  border: 1px solid #222;
}
legend {
  margin-left: -4px;
  padding: 0 2px;
}
fieldset label {
  display: flex;
  align-items: center;
  gap: 4px;
  height: 15px;
}
.off {
  padding-left: 4px;
  color: #1c1c1c;
}
.off legend {
  margin-left: -1px;
  color: #b8b8b8;
}
fieldset input {
  appearance: none;
  width: 9px;
  height: 9px;
  border: 2px solid;
  border-color: #141414 #5c5c5c #5c5c5c #141414;
  border-radius: 50%;
  background: #3c3c3c;
}
fieldset input:checked {
  background: #f0f0f0;
}
.off input:checked {
  background: #111;
}
.copies {
  display: flex;
  align-items: center;
  height: 14px;
  margin-top: 5px;
}
.copies label {
  width: 96px;
}
.copies input {
  width: 31px;
}
.nlabel {
  display: block;
  margin-top: 5px;
}
.cname {
  display: block;
  width: 100%;
  height: 16px;
  margin-top: 1px;
  padding-left: 0;
  border: 2px solid #e8e8e8;
  background: #5a5a5a;
  font: 9px/12px Roboto, sans-serif;
}
.dbtns {
  display: flex;
  justify-content: flex-end;
  gap: 3px;
  margin-top: 7px;
}
.dbtns button {
  width: 59px;
  height: 19px;
}
.marks {
  position: absolute;
  left: -5px;
  top: -1px;
  width: 220px;
  height: 192px;
  pointer-events: none;
}

/* watermarks */
.baidu {
  position: absolute;
  right: 128px;
  bottom: 24px;
  width: 104px;
  color: rgba(245, 245, 245, 0.8);
  pointer-events: none;
}
.baidu svg {
  width: 34px;
  height: 24px;
  margin: 0 0 3px 72px;
  fill: #c6c6c6;
}
.baidu b {
  display: block;
  font: 700 40px/34px 'Liberation Sans', sans-serif;
}
.baidu span {
  display: block;
  font: 18px/22px 'Liberation Sans', sans-serif;
}
.brand {
  position: absolute;
  right: 0;
  bottom: 0;
  display: flex;
  align-items: center;
  gap: 6px;
  width: 200px;
  height: 95px;
  padding-left: 10px;
  background: #222f57;
  color: #cfd0d2;
}
.brand svg {
  width: 48px;
  height: 66px;
}
.bname {
  display: flex;
  align-items: center;
  height: 38px;
  font: 700 28px/38px 'Noto Sans CJK SC', sans-serif;
  white-space: nowrap;
}
.bname span {
  font: 400 36px/38px Roboto, sans-serif;
}
.burl {
  font: 26px/26px Roboto, sans-serif;
}
</style>
